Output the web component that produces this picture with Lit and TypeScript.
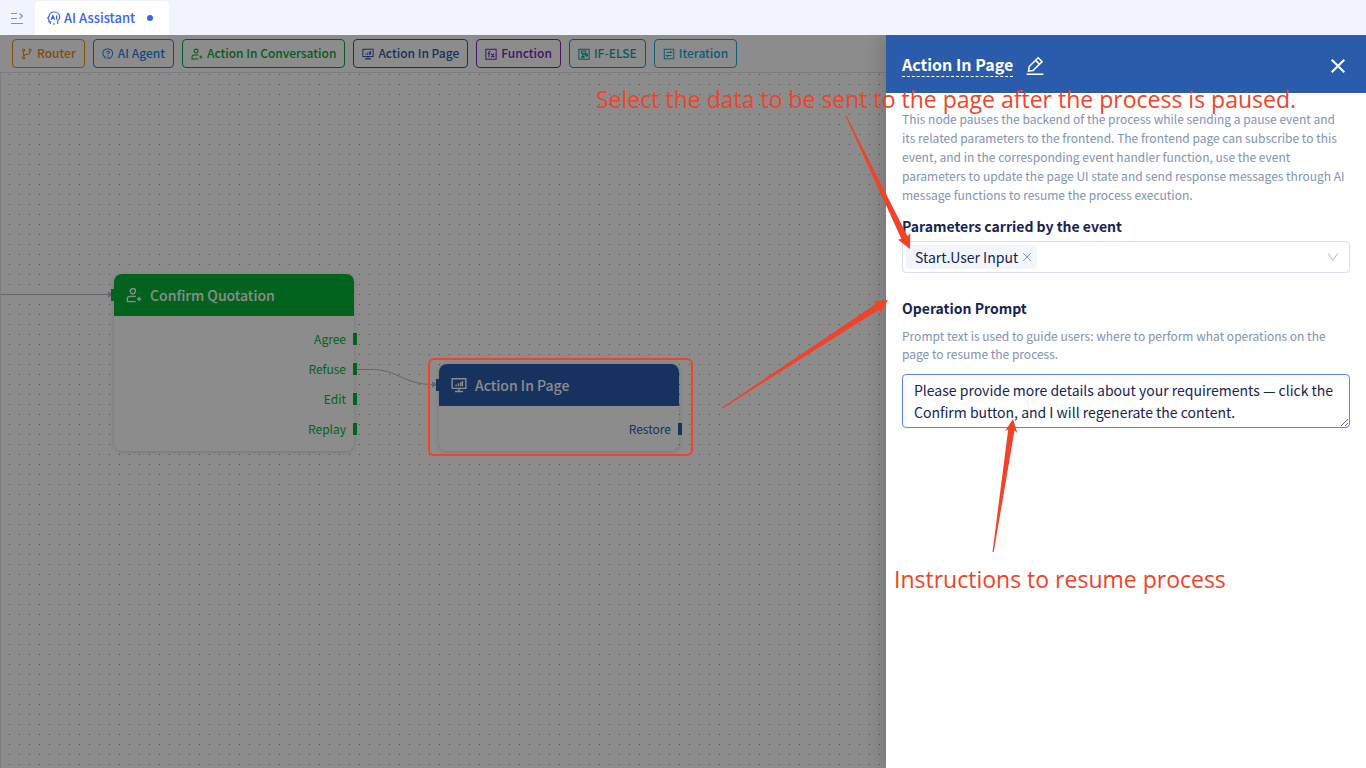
import { LitElement, html, svg, css } from "lit";
import { customElement } from "lit/decorators.js";
import { classMap } from "lit/directives/class-map.js";

const icons: Record<string, unknown> = {
  collapse: svg`<path d="M1 2.500h6M1 7.500h6M1 12.500h12" /><path d="M9.500 2.500l3 2.500-3 2.500" />`,
  ai: svg`<path d="M3.200 13v-2.400H1.900V8.300L.8 7.200l1.300-2C2.300 2.500 4.300 1 7 1c3.300 0 5.700 2.200 5.700 5 0 1.800-.9 3.100-2 4v3M6 13h2" /><path d="M4.200 8.800 5.900 4.600l1.700 4.200M4.800 7.500h2.200M9.600 4.600v4.200" />`,
  router: svg`<circle cx="3" cy="2.500" r="1.300" /><circle cx="3" cy="11.500" r="1.300" /><circle cx="10.500" cy="2.500" r="1.300" /><path d="M3 4v6M10.500 4c0 3-1.500 3.500-4 3.700C4.500 7.900 3 8.500 3 10" />`,
  agent: svg`<path d="M3.500 12.500v-2.200C1.800 9.500.8 8 1 6 1.200 3 3.800 1.200 6.800 1.200c3.200 0 5.500 2 5.700 5 0 2.600-1.500 4.300-3 5.600H5.500M5.400 5.200c.1-1 .8-1.500 1.600-1.500 1 0 1.600.6 1.600 1.400 0 1.200-1.600 1.200-1.600 2.400M7 8.800v1" />`,
  person: svg`<circle cx="6" cy="3.600" r="2.300" /><path d="M8.600 8.200H3.500C2 8.200 1.200 9.100 1.200 10.500v2.300h7.300M11.500 8.700v3.600M9.700 10.500h3.600" />`,
  screen: svg`<path d="M1 1.500h12v8.500H1zM7 10v2.500M3.500 12.700h7M4.500 6.500v1.500M6.500 5.500V8M8.500 4.500V8M10 3.500V8" />`,
  fx: svg`<path d="M1 1.500h12v11.500H1z" /><path d="M6.300 3.800c-1.300-.3-1.700.2-1.700 1.500v5.500M3.200 6.500h2.800M7.300 6.500l3.500 4.300M10.800 6.500l-3.500 4.300" />`,
  branch: svg`<path d="M1 1.500h12v11.500H1z" /><path d="M4 3.500h5v2.500H4zM5.500 6v4.500M5.500 8h4.500M9 7h2v2.200H9zM4.500 10h2.500v1.500H4.500z" />`,
  loop: svg`<path d="M1.500 1.500h11v11h-11z" /><path d="M4 5.300h6L8.400 3.700M10 8.700H4l1.600 1.600" />`,
  edit: svg`<path d="M.5 13.400h13M2 11l.5-3.600L9.500.6l3 3-7 6.900zM7.500 2.600l3 3" />`,
  close: svg`<path d="M1.500 1.500l11 11M12.500 1.500l-11 11" />`,
  down: svg`<path d="M1.500 3l5.500 8 5.500-8" />`,
};
const icon = (name: string, cls: string) =>
  html`<svg class="icon ${cls}" viewBox="0 0 14 14" aria-hidden="true">${icons[name]}</svg>`;

const tools = [
  ["router", "Router", "orange"],
  ["agent", "AI Agent", "sky"],
  ["person", "Action In Conversation", "green"],
  ["screen", "Action In Page", "navy"],
  ["fx", "Function", "purple"],
  ["branch", "IF-ELSE", "teal"],
  ["loop", "Iteration", "cyan"],
];

const shared = css`
  * { box-sizing: border-box; }
  button { font: inherit; color: inherit; background: none; border: 0; padding: 0; cursor: pointer; }
  .icon { display: block; flex: none; fill: none; stroke: currentColor; stroke-width: 1.2; }
  .text { padding-bottom: 2px; }
  .s10 { width: 10px; height: 10px; }
  .s12 { width: 12px; height: 12px; }
  .s14 { width: 14px; height: 14px; }
  .s16 { width: 16px; height: 16px; }
`;

@customElement("flow-canvas")
class FlowCanvas extends LitElement {
  static styles = [shared, css`
    :host { display: block; flex: 1; position: relative; overflow: hidden; border: 1px solid #e4e4e8; border-width: 1px 0 0 1px; background: #fff; }
    .wires { position: absolute; inset: 0; width: 100%; height: 100%; }
    .wire { fill: none; stroke: #b6b9c9; stroke-width: 1; }
    .tip { fill: #b6b9c9; }
    .dot { fill: #919191; }
    .node { position: absolute; width: 240px; border-radius: 8px; background: #fff; box-shadow: 0 1px 5px rgba(0, 0, 0, .16); }
    .confirm { left: 113px; top: 201px; color: #03b435; }
    .page { left: 438px; top: 291px; color: #2a5cab; }
    .head { display: flex; align-items: center; height: 42px; padding: 0 12px; border-radius: 8px 8px 0 0; background: currentColor; }
    .headin { display: flex; align-items: center; gap: 8px; color: #fff; }
    .title { margin: 0; font-size: 14px; line-height: 20px; font-weight: 500; }
    .outs { list-style: none; margin: 0; padding: 8px 0 7px; }
    .out { display: flex; align-items: center; justify-content: flex-end; gap: 7px; height: 30px; margin-right: -3px; font-size: 12px; }
    .port { width: 4px; height: 12px; background: currentColor; }
    .in { position: absolute; left: -3px; top: 15px; }
  `];
  node(kind: string, glyph: string, title: string, outs: string[]) {
    return html`<section class=${classMap({ node: true, [kind]: true })}>
      <span class="port in"></span>
      <header class="head"><div class="headin">${icon(glyph, "s16")}<h2 class="title">${title}</h2></div></header>
      <ul class="outs">${outs.map((o) => html`<li class="out"><span class="text">${o}</span><span class="port"></span></li>`)}</ul>
    </section>`;
  }
  render() {
    return html`
      <svg class="wires" aria-hidden="true">
        <defs><pattern id="grid" width="10" height="10" patternUnits="userSpaceOnUse"><rect class="dot" x="8" y="1" width="1" height="1" /></pattern></defs>
        <rect width="100%" height="100%" fill="url(#grid)" />
        <path class="wire" d="M0 221.500h108M356 296.500h14c28 0 32 15 62 15" />
        <path class="tip" d="M107 218.500l6 3-6 3zM431 308.500l6 3-6 3z" />
      </svg>
      ${this.node("confirm", "person", "Confirm Quotation", ["Agree", "Refuse", "Edit", "Replay"])}
      ${this.node("page", "screen", "Action In Page", ["Restore"])}
    `;
  }
}

@customElement("node-drawer")
class NodeDrawer extends LitElement {
  static styles = [shared, css`
    :host { display: flex; flex-direction: column; background: #fff; color: #152552; box-shadow: -6px 0 16px rgba(0, 0, 0, .14); }
    .head { display: flex; align-items: center; gap: 13px; height: 58px; padding: 3px 20px 0 16px; background: #2a5cab; color: #fff; }
    .name { margin: 0; padding-bottom: 2px; font-size: 16px; line-height: 20px; font-weight: 700; border-bottom: 1px dashed #fff; }
    .pen { width: 18px; height: 18px; }
    .x { width: 16px; height: 16px; stroke-width: 1.8; }
    .close { margin-left: auto; }
    .body { display: flex; flex-direction: column; padding: 16px; }
    .hint { margin: 0; color: #8292b3; font-size: 12px; line-height: 19px; }
    .tight { line-height: 18px; margin: 8px 0 11px; }
    .label { font-size: 14px; line-height: 22px; font-weight: 700; }
    .first { margin: 11px 0 4px; }
    .second { margin-top: 24px; }
    .picker { display: flex; align-items: center; height: 32px; padding: 3px; border: 1px solid #dcdeea; border-radius: 4px; position: relative; }
    .tag { display: flex; align-items: center; gap: 4px; height: 24px; padding: 0 5px 0 9px; border-radius: 4px; background: #f2f6fc; font-size: 14px; }
    .drop { color: #7283a8; }
    .select { flex: 1; height: 24px; border: 0; background: none; appearance: none; outline: none; }
    .chevron { position: absolute; right: 10px; top: 9px; color: #bcc3d6; pointer-events: none; }
    .prompt { display: block; width: 100%; height: 54px; padding: 4px 11px; border: 1px solid #5b83f5; border-radius: 4px; outline: none; color: inherit; font-family: inherit; font-size: 14px; line-height: 22px; resize: vertical; overflow: hidden; }
  `];
  render() {
    return html`
      <header class="head">
        <h1 class="name">Action In Page</h1>
        <button aria-label="Rename">${icon("edit", "pen")}</button>
        <button class="close" aria-label="Close">${icon("close", "x")}</button>
      </header>
      <div class="body">
        <p class="hint">This node pauses the backend of the process while sending a pause event and its related parameters to the frontend. The frontend page can subscribe to this event, and in the corresponding event handler function, use the event parameters to update the page UI state and send response messages through AI message functions to resume the process execution.</p>
        <label class="label first" for="params">Parameters carried by the event</label>
        <div class="picker">
          <span class="tag">Start.User Input<button class="drop" aria-label="Remove">${icon("close", "s10")}</button></span>
          <select class="select" id="params"><option></option></select>
          ${icon("down", "s12 chevron")}
        </div>
        <label class="label second" for="prompt">Operation Prompt</label>
        <p class="hint tight">Prompt text is used to guide users: where to perform what operations on the page to resume the process.</p>
        <textarea class="prompt" id="prompt" spellcheck="false" .value=${"Please provide more details about your requirements — click the Confirm button, and I will regenerate the content."}></textarea>
      </div>
    `;
  }
}

@customElement("app-root")
class AppRoot extends LitElement {
  static styles = [shared, css`
    :host { display: flex; flex-direction: column; height: 100vh; font-family: "Noto Sans CJK SC", "Noto Sans", sans-serif; font-size: 12px; color: #152552; }
    .tabs { display: flex; align-items: flex-end; height: 35px; flex: none; background: #f1f4fd; }
    .menu { display: flex; align-items: center; height: 35px; padding: 0 11px 0 10px; color: #8292b3; }
    .tab { display: flex; align-items: center; gap: 3px; height: 34px; padding: 0 16px 0 12px; border-radius: 4px 4px 0 0; background: #fff; color: #3a62f5; font-size: 13px; font-weight: 500; }
    .unsaved { width: 6px; height: 6px; margin-left: 9px; border-radius: 50%; background: currentColor; }
    .work { display: flex; flex-direction: column; flex: 1; position: relative; min-height: 0; overflow: hidden; }
    .tools { display: flex; gap: 8px; padding: 4px 12px; background: #fff; }
    .tool { display: flex; align-items: center; gap: 4px; height: 29px; padding: 0 8px; border: 1px solid currentColor; border-radius: 4px; font-weight: 500; }
    .orange { color: #f08a13; }
    .sky { color: #2a84e8; }
    .green { color: #03a83a; }
    .navy { color: #2a5cab; }
    .purple { color: #7526c9; }
    .teal { color: #0fa5a5; }
    .cyan { color: #1ea7e0; }
    .mask { position: absolute; inset: 0; background: rgba(0, 0, 0, .45); }
    .drawer { position: absolute; right: 0; top: 0; bottom: 0; width: 480px; }
    .marks { position: absolute; left: 0; top: 0; width: 100%; height: 100%; pointer-events: none; fill: #f0432a; }
    .frame { fill: none; stroke: #f0432a; stroke-width: 2; }
    .note { position: absolute; margin: 0; color: #f0432a; font-family: "Open Sans", "Noto Sans", sans-serif; font-size: 23px; line-height: 32px; white-space: nowrap; }
    .n1 { left: 596px; top: 48px; }
    .n2 { left: 894px; top: 528px; }
  `];
  render() {
    return html`
      <nav class="tabs">
        <button class="menu" aria-label="Expand menu">${icon("collapse", "s14")}</button>
        <button class="tab">${icon("ai", "s14")}<span class="text">AI Assistant</span><span class="unsaved"></span></button>
      </nav>
      <main class="work">
        <div class="tools">
          ${tools.map(([glyph, label, tone]) => html`<button class=${classMap({ tool: true, [tone]: true })}>${icon(glyph, "s12")}<span class="text">${label}</span></button>`)}
        </div>
        <flow-canvas></flow-canvas>
        <div class="mask"></div>
        <node-drawer class="drawer"></node-drawer>
        <svg class="marks" aria-hidden="true">
          <rect class="frame" x="429" y="324" width="263" height="96" rx="5" />
          <path d="M845.500 81.300 901.300 203.800 898.100 204.700 910 214 910.300 198.600 907.400 200.900 846.500 80.800z" />
          <path d="M722 372.500 876.200 268.800 872.800 266.500 888 265 880.300 278 879.600 274.200 722.500 373.500z" />
          <path d="M992.500 517 1008.200 394.600 1005 396.200 1013 384 1017.300 398 1014.500 395.600 993.700 517z" />
        </svg>
        <p class="note n1">Select the data to be sent to the page after the process is paused.</p>
        <p class="note n2">Instructions to resume process</p>
      </main>
    `;
  }
}
